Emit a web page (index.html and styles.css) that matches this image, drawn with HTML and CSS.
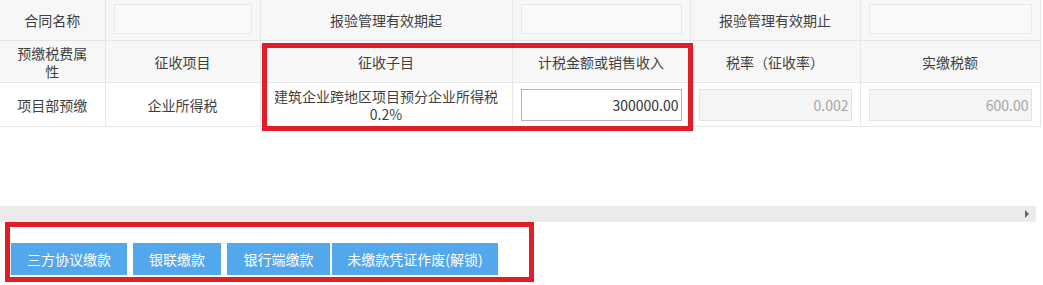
FILE: index.html
```html
<!DOCTYPE html>
<html lang="zh-CN">
<head>
  <meta charset="UTF-8" />
  <title>预缴申报</title>
  <link rel="stylesheet" href="styles.css">
</head>
<body>
<div class="sheet">
  <table class="tax-table">
    <colgroup>
      <col class="c1"><col class="c2"><col class="c3"><col class="c4"><col class="c5"><col class="c6">
    </colgroup>
    <tr class="row-info">
      <td>合同名称</td>
      <td class="field"><input type="text" class="cell-input" /></td>
      <td>报验管理有效期起</td>
      <td class="field"><input type="text" class="cell-input" /></td>
      <td>报验管理有效期止</td>
      <td class="field"><input type="text" class="cell-input" /></td>
    </tr>
    <tr class="row-head">
      <td class="tight">预缴税费属性</td>
      <td>征收项目</td>
      <td>征收子目</td>
      <td>计税金额或销售收入</td>
      <td>税率（征收率）</td>
      <td>实缴税额</td>
    </tr>
    <tr class="row-data">
      <td>项目部预缴</td>
      <td>企业所得税</td>
      <td>建筑企业跨地区项目预分企业所得税<br>0.2%</td>
      <td class="field"><input type="text" class="cell-input num" value="300000.00" /></td>
      <td class="field"><input type="text" class="cell-input num" value="0.002" disabled /></td>
      <td class="field"><input type="text" class="cell-input num" value="600.00" disabled /></td>
    </tr>
  </table>
  <div class="mark mark-table"></div>
</div>

<div class="hscroll"><span class="arrow"></span></div>

<div class="toolbar">
  <button class="btn btn-three">三方协议缴款</button>
  <button class="btn btn-union">银联缴款</button>
  <button class="btn btn-bank">银行端缴款</button>
  <button class="btn btn-void">未缴款凭证作废(解锁)</button>
</div>
</body>
</html>
```

FILE: styles.css
```css
body {
  margin: 0;
  font-family: "Noto Sans CJK SC", "Microsoft YaHei", sans-serif;
  font-size: 14px;
  color: #3f3f3f;
  background: #fff;
}
.sheet {
  position: relative;
  height: 206px;
}
.tax-table {
  width: 1040px;
  border-collapse: collapse;
  table-layout: fixed;
}
col.c1 { width: 105px; }
col.c2 { width: 155px; }
col.c3 { width: 252px; }
col.c4 { width: 178px; }
col.c5 { width: 170px; }
col.c6 { width: 180px; }
.tax-table td {
  border: 1px solid #e6e6e6;
  text-align: center;
  vertical-align: middle;
  padding: 0 8px;
  line-height: 18px;
}
.tax-table tr:first-child td {
  border-top: none;
}
.tax-table td:first-child {
  border-left: none;
}
.tax-table td.tight {
  padding: 0 12px;
}
.row-info td {
  height: 40px;
  background: #f7f7f7;
}
.row-info td.field {
  height: 33px;
  padding: 2px 8px 5px;
}
.row-head td {
  height: 41px;
  background: #f7f7f7;
}
.row-data td {
  height: 43px;
  background: #fff;
}
.cell-input {
  display: block;
  box-sizing: border-box;
  width: 100%;
  height: 30px;
  margin: 0;
  border: 1px solid #e8e8e8;
  background: #f9f9f9;
  font: inherit;
  color: #333;
  padding: 0 2px;
}
.row-data .cell-input {
  height: 32px;
  background: #fff;
  border-color: #b3b3b3;
}
.row-data .cell-input:disabled {
  background: #f5f5f5;
  border-color: #e4e4e4;
  color: #a6a6a6;
}
.num {
  text-align: right;
}
.mark {
  position: absolute;
  border: 5px solid #e11d27;
  box-sizing: border-box;
  pointer-events: none;
}
.mark-table {
  left: 262px;
  top: 43px;
  width: 431px;
  height: 88px;
}
.hscroll {
  position: relative;
  width: 1036px;
  height: 16px;
  background: #ebebeb;
}
.arrow {
  position: absolute;
  right: 7px;
  top: 4px;
  border-left: 4px solid #666;
  border-top: 4px solid transparent;
  border-bottom: 4px solid transparent;
}
.toolbar {
  display: flex;
  align-items: flex-start;
  gap: 6px;
  box-sizing: border-box;
  width: 529px;
  height: 60px;
  margin-left: 5px;
  border: 5px solid #e11d27;
  padding: 16px 1px 0;
}
.btn {
  height: 32px;
  padding: 0;
  border: none;
  background: #53a7ec;
  color: #fff;
  font: inherit;
  white-space: nowrap;
  cursor: pointer;
}
.btn-three { width: 116px; }
.btn-union { width: 88px; }
.btn-bank { width: 103px; }
.btn-void {
  width: 166px;
  margin-left: -4px;
}
```
